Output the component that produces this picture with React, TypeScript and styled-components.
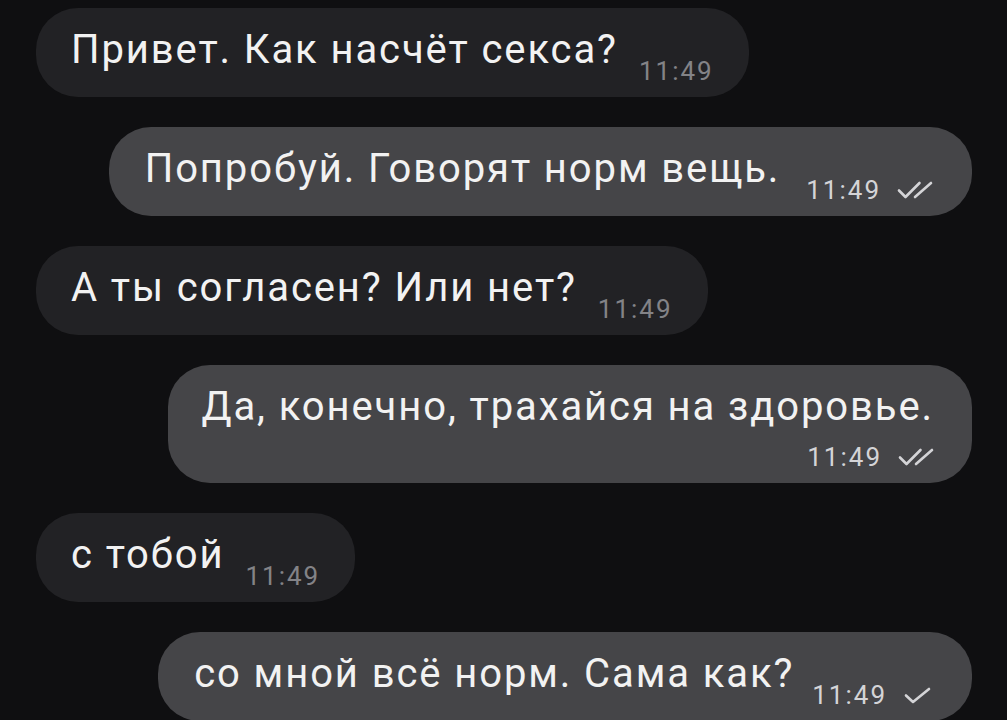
import React from "react";
import styled, { createGlobalStyle } from "styled-components";

const Global = createGlobalStyle`
  html, body { margin: 0; padding: 0; background: #0f0f11; }
  body { font-family: Roboto, "Noto Sans", "DejaVu Sans", sans-serif; overflow: hidden; }
`;

const Page = styled.div`
  width: 1007px;
  height: 720px;
  box-sizing: border-box;
  padding: 8px 35px 0 36px;
  display: flex;
  flex-direction: column;
  gap: 30px;
  background: #0f0f11;
  overflow: hidden;
`;

const Row = styled.div<{ $out?: boolean }>`
  display: flex;
  justify-content: ${(p) => (p.$out ? "flex-end" : "flex-start")};
`;

const Bubble = styled.div<{ $out?: boolean; $stacked?: boolean }>`
  box-sizing: border-box;
  display: flex;
  flex-direction: ${(p) => (p.$stacked ? "column" : "row")};
  align-items: ${(p) => (p.$stacked ? "stretch" : "flex-end")};
  background: ${(p) => (p.$out ? "#454548" : "#222225")};
  border-radius: 42px;
  padding: ${(p) => (p.$stacked ? "20px 38px 13px 33px" : p.$out ? "20px 39px 25px 36px" : "20px 35px 25px 35px")};
  color: #f2f2f2;
  white-space: nowrap;
`;

const Text = styled.span`
  font-size: 40px;
  line-height: 44px;
  letter-spacing: 1.9px;
`;

const Time = styled.span<{ $out?: boolean; $inline?: boolean; $gap?: number }>`
  display: flex;
  align-items: center;
  gap: 16px;
  margin-left: ${(p) => (p.$inline ? `${p.$gap ?? 21}px` : "0")};
  margin-bottom: ${(p) => (p.$inline ? "-12px" : "0")};
  font-size: 26px;
  line-height: 26px;
  letter-spacing: 2px;
  color: ${(p) => (p.$out ? "#d4d4d7" : "#838387")};
`;

const TimeLine = styled.div`
  display: flex;
  justify-content: flex-end;
  margin-top: 15px;
`;

const CheckIcon = styled.svg`
  display: block;
  flex: none;
`;

const Check = ({ double }: { double?: boolean }) =>
  double ? (
    <CheckIcon width="36" height="18" viewBox="0 0 36 18" fill="none" stroke="currentColor" strokeWidth="2.6" strokeLinecap="round" strokeLinejoin="round">
      <path d="M2 9.5 L8.5 16 L22.5 2" />
      <path d="M18 16 L34 2" />
    </CheckIcon>
  ) : (
    <CheckIcon width="30" height="18" viewBox="0 0 30 18" fill="none" stroke="currentColor" strokeWidth="2.6" strokeLinecap="round" strokeLinejoin="round">
      <path d="M3 9.5 L10 16 L26 3" />
    </CheckIcon>
  );

export default function App() {
  return (
    <>
      <Global />
      <Page>
        <Row>
          <Bubble>
            <Text>Привет. Как насчёт секса?</Text>
            <Time $inline>11:49</Time>
          </Bubble>
        </Row>
        <Row $out>
          <Bubble $out>
            <Text>Попробуй. Говорят норм вещь.</Text>
            <Time $out $inline $gap={26}>
              11:49
              <Check double />
            </Time>
          </Bubble>
        </Row>
        <Row>
          <Bubble>
            <Text>А ты согласен? Или нет?</Text>
            <Time $inline>11:49</Time>
          </Bubble>
        </Row>
        <Row $out>
          <Bubble $out $stacked>
            <Text>Да, конечно, трахайся на здоровье.</Text>
            <TimeLine>
              <Time $out>
                11:49
                <Check double />
              </Time>
            </TimeLine>
          </Bubble>
        </Row>
        <Row>
          <Bubble>
            <Text>с тобой</Text>
            <Time $inline>11:49</Time>
          </Bubble>
        </Row>
        <Row $out>
          <Bubble $out>
            <Text>со мной всё норм. Сама как?</Text>
            <Time $out $inline $gap={18}>
              11:49
              <Check />
            </Time>
          </Bubble>
        </Row>
      </Page>
    </>
  );
}
